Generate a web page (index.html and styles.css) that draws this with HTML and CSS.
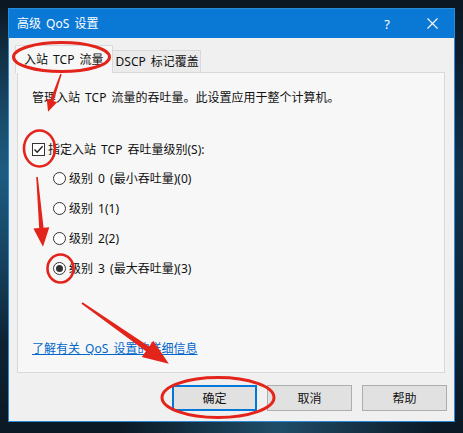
FILE: index.html
```html
<!DOCTYPE html>
<html lang="zh-CN">
<head>
<meta charset="utf-8">
<title>高级 QoS 设置</title>
<link rel="stylesheet" href="styles.css">
</head>
<body>
<div class="desktop">
  <div class="dialog">
    <div class="titlebar">
      <span class="title">高级 QoS 设置</span>
      <span class="tb-help">?</span>
      <span class="tb-close">
        <svg width="11" height="11" viewBox="0 0 11 11"><path d="M0.5 0.5 L10.5 10.5 M10.5 0.5 L0.5 10.5" stroke="#fff" stroke-width="1.1" fill="none"/></svg>
      </span>
    </div>
    <div class="body">
      <div class="tabs">
        <div class="tab active">入站 TCP 流量</div>
        <div class="tab">DSCP 标记覆盖</div>
      </div>
      <div class="panel">
        <p class="desc">管理入站 TCP 流量的吞吐量。此设置应用于整个计算机。</p>
        <div class="check-row">
          <span class="checkbox">
            <svg width="11" height="11" viewBox="0 0 11 11"><path d="M1.5 5.5 L4.2 8.3 L9.6 2.2" stroke="#222" stroke-width="1.4" fill="none"/></svg>
          </span>
          <span>指定入站 TCP 吞吐量级别(S):</span>
        </div>
        <div class="radios">
          <div class="radio-row"><span class="radio"></span><span>级别 0 (最小吞吐量)(0)</span></div>
          <div class="radio-row"><span class="radio"></span><span>级别 1(1)</span></div>
          <div class="radio-row"><span class="radio"></span><span>级别 2(2)</span></div>
          <div class="radio-row"><span class="radio checked"></span><span>级别 3 (最大吞吐量)(3)</span></div>
        </div>
        <a class="link" href="#">了解有关 QoS 设置的详细信息</a>
      </div>
      <div class="buttons">
        <button class="btn default">确定</button>
        <button class="btn">取消</button>
        <button class="btn">帮助</button>
      </div>
    </div>
  </div>

  <svg class="annot" width="463" height="433" viewBox="0 0 463 433">
    <g fill="none" stroke="#e3241b">
      <ellipse cx="61.5" cy="57" rx="48" ry="14.5" stroke-width="3"/>
      <ellipse cx="39.5" cy="148.5" rx="15.5" ry="18" stroke-width="2.6"/>
      <ellipse cx="60.5" cy="268.5" rx="13" ry="14" stroke-width="2.6"/>
      <ellipse cx="218" cy="397.5" rx="56" ry="20" stroke-width="3"/>
    </g>
    <g fill="#e3241b">
      <polygon transform="translate(61 74) rotate(108.9)" points="0,-0.7 28,-1.8 28,-5.5 40,0 28,5.5 28,1.8 0,0.7"/>
      <polygon transform="translate(37 177) rotate(85.1)" points="0,-0.8 51,-2.2 51,-8 70,0 51,8 51,2.2 0,0.8"/>
      <polygon transform="translate(82 303) rotate(35)" points="0,-1 80,-2.8 80,-10 106,0 80,10 80,2.8 0,1"/>
    </g>
  </svg>
</div>
</body>
</html>
```
FILE: styles.css
```css
* { box-sizing: border-box; }
html, body { margin: 0; padding: 0; }
body {
  width: 463px;
  height: 433px;
  overflow: hidden;
  font-family: "Noto Sans", "Noto Sans CJK SC", sans-serif;
  font-size: 12px;
  word-spacing: 2px;
  color: #111;
}
.desktop {
  position: relative;
  width: 463px;
  height: 433px;
  padding: 8px;
  background:
    radial-gradient(ellipse at 0% 40%, #1d5b80 0%, rgba(20,60,90,0) 45%),
    radial-gradient(ellipse at 60% 100%, #1f4d68 0%, rgba(20,60,90,0) 40%),
    linear-gradient(180deg, #0b1722 0%, #12324a 40%, #0e2638 75%, #0a1824 100%);
}
.dialog {
  width: 447px;
  height: 414px;
  border: 1px solid #2a8ad8;
  background: #f0f0f0;
  display: flex;
  flex-direction: column;
}
.titlebar {
  height: 29px;
  background: #0a78d5;
  color: #fff;
  display: flex;
  align-items: center;
  padding-left: 8px;
  line-height: 16px;
}
.title { font-size: 12px; }
.tb-help {
  margin-left: auto;
  width: 30px;
  text-align: center;
  font-size: 13px;
}
.tb-close {
  width: 44px;
  margin-left: 8px;
  display: flex;
  justify-content: center;
  align-items: center;
}
.body {
  flex: 1;
  display: flex;
  flex-direction: column;
  padding: 7px 9px 10px 8px;
}
.tabs {
  display: flex;
  align-items: flex-end;
  height: 27px;
  margin-left: -2px;
  position: relative;
  z-index: 1;
}
.tab {
  height: 22px;
  padding: 0 1px 0 3px;
  border: 1px solid #d9d9d9;
  border-left: none;
  border-bottom: none;
  background: #ebebeb;
  line-height: 21px;
  white-space: nowrap;
}
.tab.active {
  height: 28px;
  margin-bottom: -1px;
  padding: 0 8px 0 8px;
  border-left: 1px solid #d9d9d9;
  background: #f7f7f7;
  line-height: 28px;
}
.panel {
  height: 301px;
  border: 1px solid #d9d9d9;
  background: #f7f7f7;
  display: flex;
  flex-direction: column;
  padding: 17px 0 15px 14px;
}
.desc {
  margin: 0;
  line-height: 16px;
  white-space: nowrap;
}
.check-row {
  display: flex;
  align-items: center;
  height: 18px;
  margin-top: 34px;
  gap: 3px;
}
.checkbox {
  width: 13px;
  height: 13px;
  border: 1px solid #333;
  background: #fff;
  display: flex;
  align-items: center;
  justify-content: center;
}
.radios {
  margin-top: 5px;
  padding-left: 21px;
  display: flex;
  flex-direction: column;
}
.radio-row {
  display: flex;
  align-items: center;
  height: 30px;
  gap: 3px;
}
.radio {
  width: 13px;
  height: 13px;
  border: 1px solid #333;
  border-radius: 50%;
  background: #fff;
  display: flex;
  align-items: center;
  justify-content: center;
}
.radio.checked::after {
  content: "";
  width: 7px;
  height: 7px;
  border-radius: 50%;
  background: #333;
}
.link {
  margin-top: auto;
  line-height: 16px;
  color: #0066cc;
  text-decoration: underline;
  align-self: flex-start;
}
.buttons {
  display: flex;
  justify-content: flex-end;
  gap: 10px;
  margin-top: 12px;
  margin-right: -2px;
}
.btn {
  width: 85px;
  height: 26px;
  border: 1px solid #adadad;
  background: #e1e1e1;
  font-family: inherit;
  font-size: 12px;
  color: #111;
  padding: 0;
}
.btn.default {
  border: 2px solid #0078d7;
}
.annot {
  position: absolute;
  left: 0;
  top: 0;
  z-index: 2;
  pointer-events: none;
}
```
